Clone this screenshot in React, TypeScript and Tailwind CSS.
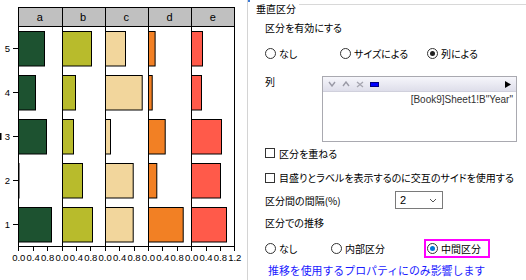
import React from 'react';

const panels = [
  { label: 'a', color: '#1d5230', w: [26, 17, 28, 0.5, 33] },
  { label: 'b', color: '#b8bb2c', w: [29, 13, 11, 20, 30] },
  { label: 'c', color: '#f2d69c', w: [20, 36.7, 5, 27.7, 27.7] },
  { label: 'd', color: '#f28024', w: [6.6, 3.7, 16.7, 8.3, 34.7] },
  { label: 'e', color: '#ff5a4a', w: [11, 10, 30, 29, 35] },
];

const X0 = 18.3;
const PW = 43.2;
const SCALE = PW / 1.2;
const px = (v: number) => Math.round(v) + 0.5;

function Chart() {
  const ends = panels.map((_, i) => X0 + PW * i);
  const right = X0 + PW * 5;
  return (
    <svg width="247" height="280" className="shrink-0" style={{ fontFamily: '"Liberation Sans", Arial, sans-serif' }}>
      <rect x="0" y="133" width="1.5" height="7" fill="#000" />
      {/* header strip */}
      <rect x={px(X0)} y={7.5} width={px(right) - px(X0)} height={19} fill="#c0c0c0" stroke="#000" shapeRendering="crispEdges" />
      {panels.map((p, i) => {
        const s = ends[i];
        return (
          <g key={p.label}>
            <text x={s + PW / 2} y={21} fontSize="11" textAnchor="middle" fill="#000">
              {p.label}
            </text>
            {p.w.map((w, r) => (
              <rect
                key={r}
                x={px(s)}
                y={31.5 + 44 * r}
                width={Math.max(w, 0.5)}
                height={34.5}
                fill={p.color}
                stroke="#000"
                strokeWidth="1"
              />
            ))}
          </g>
        );
      })}
      {/* panel separators */}
      {[...ends, right].map((x, i) => (
        <line key={i} x1={px(x)} x2={px(x)} y1={7} y2={246} stroke="#000" shapeRendering="crispEdges" />
      ))}
      {/* x axis */}
      <line x1={px(X0)} x2={px(right)} y1={246.5} y2={246.5} stroke="#000" shapeRendering="crispEdges" />
      {panels.map((p, i) => {
        const vals = i === 4 ? [0, 0.4, 0.8, 1.2] : [0, 0.4, 0.8];
        return vals.map((v) => {
          const x = ends[i] + v * SCALE;
          return (
            <g key={p.label + v}>
              <line x1={px(x)} x2={px(x)} y1={246} y2={251} stroke="#000" shapeRendering="crispEdges" />
              <text x={x + 0.5} y={261} fontSize="9.5" textAnchor="middle" fill="#000">
                {v.toFixed(1)}
              </text>
            </g>
          );
        });
      })}
      {/* y axis */}
      {[5, 4, 3, 2, 1].map((n, r) => {
        const y = 48.5 + 44 * r;
        return (
          <g key={n}>
            <line x1={13} x2={18} y1={y} y2={y} stroke="#000" shapeRendering="crispEdges" />
            <text x={10} y={y + 3.5} fontSize="9.5" textAnchor="end" fill="#000">
              {n}
            </text>
          </g>
        );
      })}
    </svg>
  );
}

function Radio({ label, checked, focus }: { label: string; checked?: boolean; focus?: boolean }) {
  return (
    <div className="flex items-center gap-[3px]">
      <span className="w-[11px] h-[11px] rounded-full border border-[#333] bg-white flex items-center justify-center">
        {checked && <span className={`w-[5px] h-[5px] rounded-full ${focus ? 'bg-[#0078d7]' : 'bg-[#222]'}`} />}
      </span>
      <span>{label}</span>
    </div>
  );
}

function Check({ label }: { label: string }) {
  return (
    <div className="flex items-center gap-[4px]">
      <span className="w-[10px] h-[10px] border border-[#333] bg-white" />
      <span>{label}</span>
    </div>
  );
}

function Chevron({ up }: { up?: boolean }) {
  return (
    <svg width="8" height="6" viewBox="0 0 8 6">
      <polyline points={up ? '1,5 4,1 7,5' : '1,1 4,5 7,1'} fill="none" stroke="#9a9aa6" strokeWidth="1.4" />
    </svg>
  );
}

export default function App() {
  return (
    <div className="w-[526px] h-[280px] flex bg-white overflow-hidden text-black">
      <Chart />
      <div
        className="flex-1 flex flex-col border-l border-[#d4d4d4] text-[10px] [font-feature-settings:'palt'] relative"
        style={{ fontFamily: '"Noto Sans CJK JP", "Noto Sans", sans-serif' }}
      >
        <span className="absolute left-0 top-0 w-[2px] h-[2px] bg-[#3b7bd8]" />
        {/* group title */}
        <div className="h-[16px] flex items-center pl-[8px]">
          <span>垂直区分</span>
          <div className="flex-1 ml-[3px] h-[5px] self-start mt-[4px] border-t border-[#d8d8d8]" />
        </div>
        <div className="pl-[17px] flex flex-col">
          <div className="h-[22px] flex items-center">区分を有効にする</div>
          <div className="h-[30px] flex items-center">
            <div className="w-[75px]"><Radio label="なし" /></div>
            <div className="w-[87px]"><Radio label="サイズによる" /></div>
            <Radio label="列による" checked />
          </div>
          <div className="flex mt-[8px] h-[66px]">
            <div className="w-[57px] leading-[12px]">列</div>
            <div className="w-[195px] h-[66px] border border-[#a9a9b0] bg-white flex flex-col">
              <div className="h-[15px] flex items-center gap-[6px] pl-[5px] pr-[5px] bg-gradient-to-b from-[#f6f6fb] to-[#dedeea] border-b border-[#d0d0dc]">
                <Chevron />
                <Chevron up />
                <svg width="8" height="7" viewBox="0 0 8 7">
                  <path d="M1 1 L7 6 M7 1 L1 6" stroke="#a6a6b0" strokeWidth="1.3" />
                </svg>
                <span className="w-[9px] h-[5px] bg-[#0000ff] border border-[#000080]" />
                <svg width="6" height="7" viewBox="0 0 6 7" className="ml-auto">
                  <path d="M0 0 L6 3.5 L0 7 Z" fill="#000" />
                </svg>
              </div>
              <div
                className="text-right pr-[3px] text-[10px] text-[#333] leading-[14px] mt-[1px]"
                style={{ fontFamily: '"Liberation Sans", Arial, sans-serif' }}
              >
                [Book9]Sheet1!B"Year"
              </div>
            </div>
          </div>
          <div className="h-[22px] flex items-center">
            <Check label="区分を重ねる" />
          </div>
          <div className="h-[27px] flex items-center">
            <Check label="目盛りとラベルを表示するのに交互のサイドを使用する" />
          </div>
          <div className="h-[18px] flex items-center">
            <div className="w-[130px]">区分間の間隔(%)</div>
            <div className="w-[48px] h-[18px] border border-[#7a7a7a] bg-white flex items-center justify-between pl-[4px] pr-[5px]">
              <span className="text-[11px]" style={{ fontFamily: '"Liberation Sans", Arial, sans-serif' }}>2</span>
              <svg width="8" height="5" viewBox="0 0 8 5">
                <polyline points="1,1 4,4 7,1" fill="none" stroke="#555" strokeWidth="1" />
              </svg>
            </div>
          </div>
          <div className="h-[26px] flex items-center">区分での推移</div>
          <div className="h-[26px] flex items-center">
            <div className="w-[66px]"><Radio label="なし" /></div>
            <div className="w-[93px]"><Radio label="内部区分" /></div>
            <div className="w-[66px] h-[19px] border-2 border-[#ff00ff] flex items-center pl-[1px]">
              <Radio label="中間区分" checked focus />
            </div>
          </div>
          <div className="h-[18px] flex items-center pl-[3px] text-[10.9px] text-[#1a1aff] [font-feature-settings:normal]">
            推移を使用するプロパティにのみ影響します
          </div>
        </div>
      </div>
    </div>
  );
}
